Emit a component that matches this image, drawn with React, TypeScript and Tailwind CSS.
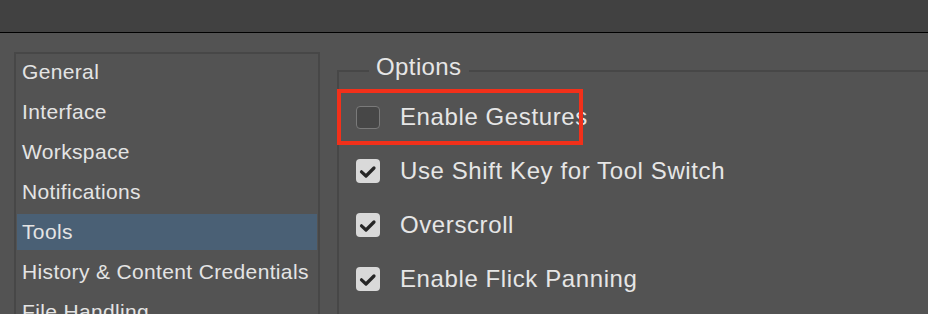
import React from "react";

const items = [
  "General",
  "Interface",
  "Workspace",
  "Notifications",
  "Tools",
  "History & Content Credentials",
  "File Handling",
];

function Check({ checked }: { checked: boolean }) {
  if (!checked) {
    return (
      <div className="w-[24px] h-[23px] shrink-0 rounded-[4px] border-[1.5px] border-[#7a7a7a] bg-[#474747]" />
    );
  }
  return (
    <div className="w-[24px] h-[24px] shrink-0 rounded-[4px] bg-[#d9d9d9] flex items-center justify-center">
      <svg width="24" height="24" viewBox="0 0 24 24">
        <path d="M5.5 12.8 L10 17 L18 9" fill="none" stroke="#262626" strokeWidth="3.2" strokeLinecap="round" strokeLinejoin="round" />
      </svg>
    </div>
  );
}

const options = [
  { label: "Enable Gestures", checked: false },
  { label: "Use Shift Key for Tool Switch", checked: true },
  { label: "Overscroll", checked: true },
  { label: "Enable Flick Panning", checked: true },
];

export default function App() {
  return (
    <div
      className="w-[928px] h-[314px] overflow-hidden bg-[#535353] flex flex-col"
      style={{ fontFamily: '"Liberation Sans", Arial, sans-serif' }}
    >
      <div className="h-[33px] shrink-0 bg-[#414141] border-b border-black" />
      <div className="flex pt-[19px] pl-[14px]">
        <div className="w-[306px] h-[300px] shrink-0 border-2 border-[#474747] flex flex-col gap-[4px] px-px">
          {items.map((it) => (
            <div
              key={it}
              className={`h-[36px] shrink-0 flex items-center pl-[5px] text-[21px] tracking-[0.35px] text-[#e4e4e4] ${
                it === "Tools" ? "bg-[#4a6075]" : ""
              }`}
            >
              {it}
            </div>
          ))}
        </div>
        <div className="relative ml-[17px] mt-[18px] flex-1 h-[300px] border-t-2 border-l-2 border-[#474747] pt-[18px]">
          <div className="absolute -top-[21px] left-[30px] px-[7px] bg-[#535353] text-[24px] leading-[32px] tracking-[0.4px] text-[#e6e6e6]">
            Options
          </div>
          <div className="absolute top-[17px] -left-[2px] w-[246px] h-[56px] border-4 border-[#f2301a]" />
          {options.map((o) => (
            <div key={o.label} className="h-[54px] flex items-center pl-[17px] gap-[20px]">
              <Check checked={o.checked} />
              <span className="text-[24px] tracking-[0.6px] text-[#e6e6e6] whitespace-nowrap">{o.label}</span>
            </div>
          ))}
        </div>
      </div>
    </div>
  );
}
